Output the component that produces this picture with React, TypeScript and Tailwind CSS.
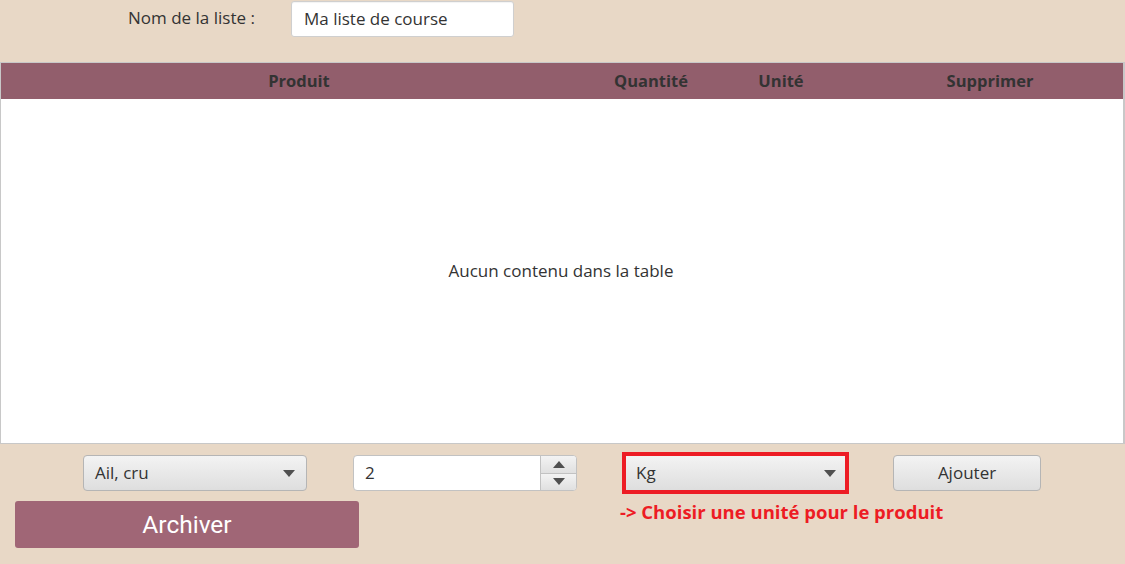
import React from "react";

function Caret() {
  return (
    <svg width="12" height="7" viewBox="0 0 12 7" className="block">
      <polygon points="0,0 12,0 6,7" fill="#505050" />
    </svg>
  );
}

export default function App() {
  return (
    <div className="w-[1125px] h-[564px] bg-[#e8d8c6] font-['Open_Sans',sans-serif] text-[#333333] overflow-hidden">
      <div className="h-[62px] flex items-start">
        <div className="ml-[128px] w-[163px] mt-[6px] text-[17px] leading-[24px]">Nom de la liste :</div>
        <div className="mt-[1px] w-[223px] h-[36px] bg-white border border-[#cfcfcf] rounded-[3px] flex items-center pl-[12px] text-[17px] shadow-[inset_0_1px_1px_rgba(0,0,0,0.05)]">
          Ma liste de course
        </div>
      </div>

      <div className="h-[382px] border border-[#c8c8c8] border-r-2 flex flex-col">
        <div className="h-[36px] bg-[#925e6c] flex items-center font-bold text-[16.5px] text-[#333333]">
          <div className="w-[596px] text-center">Produit</div>
          <div className="w-[108px] text-center">Quantité</div>
          <div className="w-[152px] text-center">Unité</div>
          <div className="flex-1 text-center">Supprimer</div>
        </div>
        <div className="flex-1 bg-white flex items-center justify-center text-[17px] pr-[2px]">
          Aucun contenu dans la table
        </div>
      </div>

      <div className="flex items-center pt-[8px] h-[50px]">
        <div className="ml-[83px] w-[224px] h-[36px] rounded-[4px] border border-[#b5b5b5] bg-gradient-to-b from-[#f3f3f3] to-[#dedede] flex items-center justify-between pl-[11px] pr-[11px] text-[17px]">
          <span>Ail, cru</span>
          <Caret />
        </div>
        <div className="ml-[46px] w-[224px] h-[36px] rounded-[4px] border border-[#c2c2c2] bg-white flex overflow-hidden">
          <div className="flex-1 flex items-center pl-[11px] text-[17px]">2</div>
          <div className="w-[36px] flex flex-col border-l border-[#c2c2c2]">
            <div className="flex-1 bg-gradient-to-b from-[#f3f3f3] to-[#e0e0e0] flex items-center justify-center border-b border-[#c2c2c2]">
              <svg width="12" height="7" viewBox="0 0 12 7"><polygon points="0,7 12,7 6,0" fill="#505050" /></svg>
            </div>
            <div className="flex-1 bg-gradient-to-b from-[#f3f3f3] to-[#e0e0e0] flex items-center justify-center">
              <Caret />
            </div>
          </div>
        </div>
        <div className="ml-[45px] w-[227px] h-[42px] border-[4px] border-[#ed1c24] flex">
          <div className="flex-1 bg-gradient-to-b from-[#f3f3f3] to-[#dedede] flex items-center justify-between pl-[10px] pr-[9px] text-[17px]">
            <span>Kg</span>
            <Caret />
          </div>
        </div>
        <div className="ml-[44px] w-[148px] h-[36px] rounded-[4px] border border-[#b5b5b5] bg-gradient-to-b from-[#f3f3f3] to-[#dedede] flex items-center justify-center text-[17px]">
          Ajouter
        </div>
      </div>

      <div className="flex items-start pt-[7px]">
        <div className="ml-[15px] w-[344px] h-[47px] rounded-[3px] bg-[#a06676] flex items-center justify-center text-white text-[24.5px] font-['Roboto',sans-serif] pt-[2px]">
          Archiver
        </div>
        <div className="ml-[261px] -mt-[1px] text-[#ed1c24] font-bold text-[18.5px] leading-[24px]">
          -&gt; Choisir une unité pour le produit
        </div>
      </div>
    </div>
  );
}
